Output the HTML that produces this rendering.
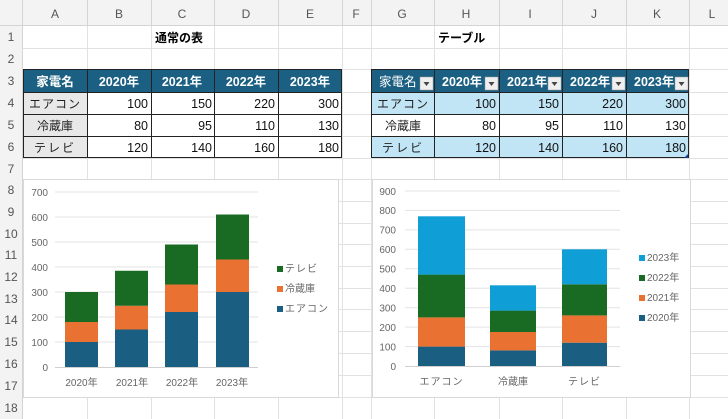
<!DOCTYPE html>
<html><head><meta charset="utf-8"><style>
html,body{margin:0;padding:0;background:#fff;}
svg{display:block;font-family:"Liberation Sans","Noto Sans CJK JP",sans-serif;}
</style></head><body>
<svg width="728" height="419" viewBox="0 0 728 419" xmlns="http://www.w3.org/2000/svg">
<rect width="728" height="419" fill="#fff"/>
<rect x="0" y="0" width="728" height="26" fill="#f3f3f3"/>
<rect x="0" y="0" width="23" height="419" fill="#f3f3f3"/>
<g stroke="#e1e1e1" stroke-width="1">
<line x1="87.5" y1="26" x2="87.5" y2="419"/><line x1="151.5" y1="26" x2="151.5" y2="419"/><line x1="214.5" y1="26" x2="214.5" y2="419"/><line x1="278.5" y1="26" x2="278.5" y2="419"/><line x1="342.5" y1="26" x2="342.5" y2="419"/><line x1="371.5" y1="26" x2="371.5" y2="419"/><line x1="434.5" y1="26" x2="434.5" y2="419"/><line x1="499.5" y1="26" x2="499.5" y2="419"/><line x1="562.5" y1="26" x2="562.5" y2="419"/><line x1="626.5" y1="26" x2="626.5" y2="419"/><line x1="689.5" y1="26" x2="689.5" y2="419"/>
<line x1="23" y1="48.5" x2="728" y2="48.5"/><line x1="23" y1="69.5" x2="728" y2="69.5"/><line x1="23" y1="92.5" x2="728" y2="92.5"/><line x1="23" y1="114.5" x2="728" y2="114.5"/><line x1="23" y1="136.5" x2="728" y2="136.5"/><line x1="23" y1="158.5" x2="728" y2="158.5"/><line x1="23" y1="179.5" x2="728" y2="179.5"/><line x1="23" y1="201.5" x2="728" y2="201.5"/><line x1="23" y1="223.5" x2="728" y2="223.5"/><line x1="23" y1="244.5" x2="728" y2="244.5"/><line x1="23" y1="266.5" x2="728" y2="266.5"/><line x1="23" y1="288.5" x2="728" y2="288.5"/><line x1="23" y1="309.5" x2="728" y2="309.5"/><line x1="23" y1="331.5" x2="728" y2="331.5"/><line x1="23" y1="353.5" x2="728" y2="353.5"/><line x1="23" y1="375.5" x2="728" y2="375.5"/><line x1="23" y1="397.5" x2="728" y2="397.5"/>
</g>
<g stroke="#d4d4d4"><line x1="0" y1="25.5" x2="728" y2="25.5"/><line x1="22.5" y1="0" x2="22.5" y2="419"/>
<line x1="87.5" y1="0" x2="87.5" y2="26"/><line x1="151.5" y1="0" x2="151.5" y2="26"/><line x1="214.5" y1="0" x2="214.5" y2="26"/><line x1="278.5" y1="0" x2="278.5" y2="26"/><line x1="342.5" y1="0" x2="342.5" y2="26"/><line x1="371.5" y1="0" x2="371.5" y2="26"/><line x1="434.5" y1="0" x2="434.5" y2="26"/><line x1="499.5" y1="0" x2="499.5" y2="26"/><line x1="562.5" y1="0" x2="562.5" y2="26"/><line x1="626.5" y1="0" x2="626.5" y2="26"/><line x1="689.5" y1="0" x2="689.5" y2="26"/></g>
<g fill="#555" font-size="12" text-anchor="middle">
<text x="55" y="18">A</text><text x="119" y="18">B</text><text x="182" y="18">C</text><text x="246" y="18">D</text><text x="310" y="18">E</text><text x="356" y="18">F</text><text x="402" y="18">G</text><text x="466" y="18">H</text><text x="530" y="18">I</text><text x="594" y="18">J</text><text x="657" y="18">K</text><text x="712" y="18">L</text>
<text x="11" y="41">1</text><text x="11" y="63">2</text><text x="11" y="85">3</text><text x="11" y="107">4</text><text x="11" y="129">5</text><text x="11" y="151">6</text><text x="11" y="173">7</text><text x="11" y="194">8</text><text x="11" y="216">9</text><text x="11" y="238">10</text><text x="11" y="259">11</text><text x="11" y="281">12</text><text x="11" y="303">13</text><text x="11" y="324">14</text><text x="11" y="346">15</text><text x="11" y="368">16</text><text x="11" y="390">17</text><text x="11" y="412">18</text>
</g>
<g font-size="12" font-weight="bold" fill="#000"><text x="155" y="42">通常の表</text><text x="438" y="42">テーブル</text></g>

<rect x="23" y="69" width="319" height="23" fill="#1b5f82"/>
<rect x="23" y="92" width="64" height="66" fill="#e8e8e8"/>
<rect x="87" y="92" width="255" height="66" fill="#fff"/>
<g stroke="#222" stroke-width="1" fill="none">
<rect x="23.5" y="69.5" width="318" height="88"/>
<line x1="87.5" y1="69" x2="87.5" y2="158"/><line x1="151.5" y1="69" x2="151.5" y2="158"/><line x1="214.5" y1="69" x2="214.5" y2="158"/><line x1="278.5" y1="69" x2="278.5" y2="158"/>
<line x1="23" y1="92.5" x2="342" y2="92.5"/><line x1="23" y1="114.5" x2="342" y2="114.5"/><line x1="23" y1="136.5" x2="342" y2="136.5"/>
</g>
<g font-size="12.5" font-weight="bold" fill="#fff" text-anchor="middle">
<text x="55" y="86">家電名</text><text x="119" y="86">2020年</text><text x="182" y="86">2021年</text><text x="246" y="86">2022年</text><text x="310" y="86">2023年</text></g>
<g font-size="12" fill="#222" text-anchor="middle"><text x="55" y="108" letter-spacing="1">エアコン</text><text x="55" y="130">冷蔵庫</text><text x="55" y="152" letter-spacing="2">テレビ</text></g>
<g font-size="12.5" fill="#111" text-anchor="end">
<text x="148" y="108">100</text><text x="212" y="108">150</text><text x="275" y="108">220</text><text x="339" y="108">300</text>
<text x="148" y="130">80</text><text x="212" y="130">95</text><text x="275" y="130">110</text><text x="339" y="130">130</text>
<text x="148" y="152">120</text><text x="212" y="152">140</text><text x="275" y="152">160</text><text x="339" y="152">180</text></g>

<rect x="371" y="69" width="318" height="23" fill="#1b5f82"/>
<rect x="371" y="92" width="318" height="22" fill="#c1e5f5"/>
<rect x="371" y="114" width="318" height="22" fill="#fff"/>
<rect x="371" y="136" width="318" height="22" fill="#c1e5f5"/>
<g stroke="#222" stroke-width="1" fill="none">
<rect x="371.5" y="69.5" width="317" height="88"/>
<line x1="434.5" y1="69" x2="434.5" y2="158"/><line x1="499.5" y1="69" x2="499.5" y2="158"/><line x1="562.5" y1="69" x2="562.5" y2="158"/><line x1="626.5" y1="69" x2="626.5" y2="158"/>
<line x1="371" y1="92.5" x2="689" y2="92.5"/><line x1="371" y1="114.5" x2="689" y2="114.5"/><line x1="371" y1="136.5" x2="689" y2="136.5"/>
</g>
<g font-size="12.5" font-weight="bold" fill="#fff">
<text x="379" y="86" font-weight="normal">家電名</text><text x="442" y="86">2020年</text><text x="507" y="86">2021年</text><text x="570" y="86">2022年</text><text x="634" y="86">2023年</text></g>
<g fill="#efefef" stroke="#999" stroke-width="0.5">
<rect x="420" y="77" width="13" height="13"/><rect x="485" y="77" width="13" height="13"/><rect x="548" y="77" width="13" height="13"/><rect x="612" y="77" width="13" height="13"/><rect x="675" y="77" width="13" height="13"/></g>
<g fill="#444"><path d="M423.5 82h6l-3 4z"/><path d="M488.5 82h6l-3 4z"/><path d="M551.5 82h6l-3 4z"/><path d="M615.5 82h6l-3 4z"/><path d="M678.5 82h6l-3 4z"/></g>
<g font-size="12" fill="#222" text-anchor="middle"><text x="403" y="108" letter-spacing="1">エアコン</text><text x="403" y="130">冷蔵庫</text><text x="403" y="152" letter-spacing="2">テレビ</text></g>
<g font-size="12.5" fill="#111" text-anchor="end">
<text x="496" y="108">100</text><text x="559" y="108">150</text><text x="623" y="108">220</text><text x="686" y="108">300</text>
<text x="496" y="130">80</text><text x="559" y="130">95</text><text x="623" y="130">110</text><text x="686" y="130">130</text>
<text x="496" y="152">120</text><text x="559" y="152">140</text><text x="623" y="152">160</text><text x="686" y="152">180</text></g>
<path d="M688 154v4h-4z" fill="#1b3f8a"/>

<rect x="23.5" y="179.5" width="315" height="218" fill="#fff" stroke="#d9d9d9"/>
<g stroke="#e3e3e3"><line x1="55" y1="342" x2="258" y2="342"/><line x1="55" y1="317" x2="258" y2="317"/><line x1="55" y1="292" x2="258" y2="292"/><line x1="55" y1="267" x2="258" y2="267"/><line x1="55" y1="242" x2="258" y2="242"/><line x1="55" y1="217" x2="258" y2="217"/><line x1="55" y1="192" x2="258" y2="192"/></g>
<line x1="55" y1="367.5" x2="258" y2="367.5" stroke="#d0d0d0"/>
<g font-size="10" fill="#666" text-anchor="end">
<text x="48" y="371">0</text><text x="48" y="346">100</text><text x="48" y="321">200</text><text x="48" y="296">300</text><text x="48" y="271">400</text><text x="48" y="246">500</text><text x="48" y="221">600</text><text x="48" y="196">700</text></g>
<g fill="#1a5f82"><rect x="65" y="342" width="33" height="25"/><rect x="115" y="329.5" width="33" height="37.5"/><rect x="165" y="312" width="33" height="55"/><rect x="216" y="292" width="33" height="75"/></g>
<g fill="#e97132"><rect x="65" y="322" width="33" height="20"/><rect x="115" y="305.75" width="33" height="23.75"/><rect x="165" y="284.5" width="33" height="27.5"/><rect x="216" y="259.5" width="33" height="32.5"/></g>
<g fill="#196b24"><rect x="65" y="292" width="33" height="30"/><rect x="115" y="270.75" width="33" height="35"/><rect x="165" y="244.5" width="33" height="40"/><rect x="216" y="214.5" width="33" height="45"/></g>
<g font-size="10" fill="#666" text-anchor="middle"><text x="81.5" y="386">2020年</text><text x="132" y="386">2021年</text><text x="182" y="386">2022年</text><text x="232" y="386">2023年</text></g>
<rect x="277" y="266" width="6" height="6" fill="#196b24"/><rect x="277" y="286" width="6" height="6" fill="#e97132"/><rect x="277" y="306" width="6" height="6" fill="#1a5f82"/>
<g font-size="10" fill="#666"><text x="285" y="272" letter-spacing="1">テレビ</text><text x="285" y="292">冷蔵庫</text><text x="285" y="312" letter-spacing="1">エアコン</text></g>

<rect x="372.5" y="179.5" width="318" height="218" fill="#fff" stroke="#d9d9d9"/>
<g stroke="#e3e3e3"><line x1="405" y1="346.6" x2="620" y2="346.6"/><line x1="405" y1="327.1" x2="620" y2="327.1"/><line x1="405" y1="307.7" x2="620" y2="307.7"/><line x1="405" y1="288.2" x2="620" y2="288.2"/><line x1="405" y1="268.8" x2="620" y2="268.8"/><line x1="405" y1="249.3" x2="620" y2="249.3"/><line x1="405" y1="229.9" x2="620" y2="229.9"/><line x1="405" y1="210.4" x2="620" y2="210.4"/><line x1="405" y1="191" x2="620" y2="191"/></g>
<line x1="405" y1="366.5" x2="620" y2="366.5" stroke="#d0d0d0"/>
<g font-size="10" fill="#666" text-anchor="end">
<text x="396" y="370">0</text><text x="396" y="350.5">100</text><text x="396" y="331">200</text><text x="396" y="311.5">300</text><text x="396" y="292">400</text><text x="396" y="272.5">500</text><text x="396" y="253">600</text><text x="396" y="233.5">700</text><text x="396" y="214">800</text><text x="396" y="195">900</text></g>
<g fill="#1a5f82"><rect x="418" y="346.6" width="47" height="19.4"/><rect x="490" y="350.4" width="46" height="15.6"/><rect x="562" y="342.7" width="45" height="23.3"/></g>
<g fill="#e97132"><rect x="418" y="317.4" width="47" height="29.2"/><rect x="490" y="332" width="46" height="18.4"/><rect x="562" y="315.4" width="45" height="27.3"/></g>
<g fill="#196b24"><rect x="418" y="274.6" width="47" height="42.8"/><rect x="490" y="310.6" width="46" height="21.4"/><rect x="562" y="284.3" width="45" height="31.1"/></g>
<g fill="#0f9ed5"><rect x="418" y="216.3" width="47" height="58.3"/><rect x="490" y="285.3" width="46" height="25.3"/><rect x="562" y="249.3" width="45" height="35"/></g>
<g font-size="10" fill="#666" text-anchor="middle"><text x="441.5" y="385" letter-spacing="1">エアコン</text><text x="513" y="385">冷蔵庫</text><text x="584.5" y="385" letter-spacing="1">テレビ</text></g>
<rect x="639" y="255" width="6" height="6" fill="#0f9ed5"/><rect x="639" y="275" width="6" height="6" fill="#196b24"/><rect x="639" y="295" width="6" height="6" fill="#e97132"/><rect x="639" y="315" width="6" height="6" fill="#1a5f82"/>
<g font-size="10" fill="#666"><text x="647" y="261">2023年</text><text x="647" y="281">2022年</text><text x="647" y="301">2021年</text><text x="647" y="321">2020年</text></g>
</svg>
</body></html>
